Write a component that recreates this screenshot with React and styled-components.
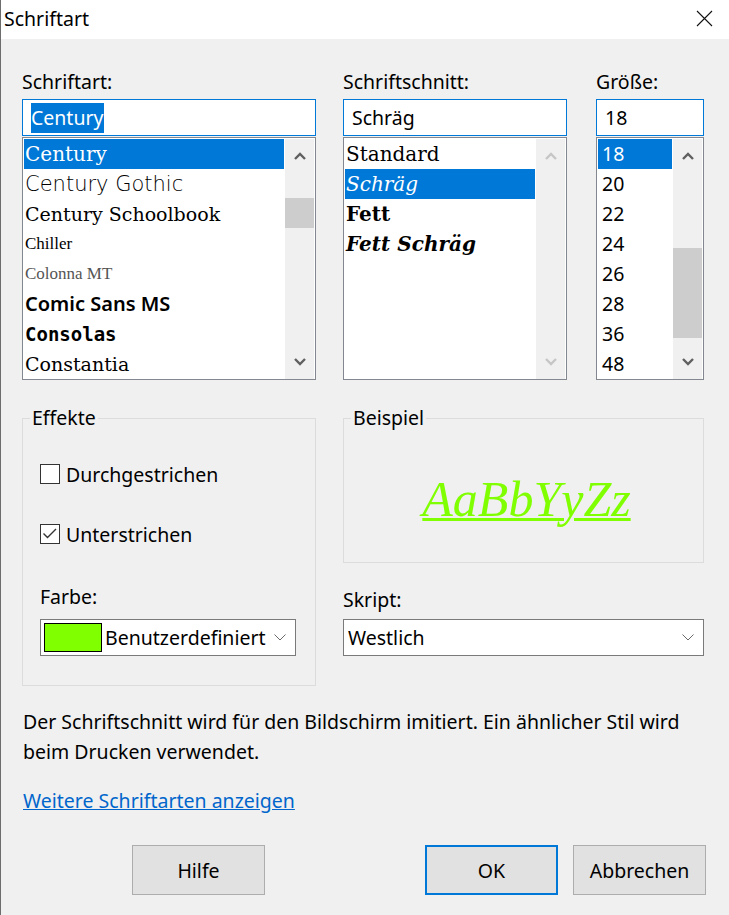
import React from "react";
import styled, { createGlobalStyle } from "styled-components";

const ui = `"Noto Sans", "Segoe UI", Arial, sans-serif`;

const GlobalStyle = createGlobalStyle`
  html, body {
    margin: 0;
    padding: 0;
    background: #f0f0f0;
  }
  * {
    box-sizing: border-box;
  }
`;

const fonts = [
  { name: "Century", family: `"DejaVu Serif", serif`, size: 20, selected: true },
  { name: "Century Gothic", family: `"DejaVu Sans", sans-serif`, size: 21, weight: 200, color: "#000" },
  { name: "Century Schoolbook", family: `"DejaVu Serif", serif`, size: 19 },
  { name: "Chiller", family: `"Liberation Serif", serif`, size: 17 },
  { name: "Colonna MT", family: `"Liberation Serif", serif`, size: 17, color: "#555" },
  { name: "Comic Sans MS", family: `"Noto Sans", sans-serif`, size: 20, weight: 600 },
  { name: "Consolas", family: `"DejaVu Sans Mono", monospace`, size: 19, weight: 600 },
  { name: "Constantia", family: `"DejaVu Serif", serif`, size: 19 },
];

const styles = [
  { name: "Standard", family: `"DejaVu Serif", serif`, size: 20 },
  { name: "Schräg", family: `"DejaVu Serif", serif`, size: 20, italic: true, selected: true },
  { name: "Fett", family: `"DejaVu Serif", serif`, size: 20, weight: 700 },
  { name: "Fett Schräg", family: `"DejaVu Serif", serif`, size: 20, weight: 700, italic: true },
];

const sizes = ["18", "20", "22", "24", "26", "28", "36", "48"];

function Chevron({ up, disabled }) {
  return (
    <svg width="12" height="8" viewBox="0 0 12 8">
      <path
        d={up ? "M1 7 L6 2 L11 7" : "M1 1 L6 6 L11 1"}
        fill="none"
        stroke={disabled ? "#c6c6c6" : "#606060"}
        strokeWidth="2.4"
      />
    </svg>
  );
}

function DropChevron() {
  return (
    <svg width="12" height="7" viewBox="0 0 12 7">
      <path d="M0.5 0.5 L6 6 L11.5 0.5" fill="none" stroke="#6a6a6a" strokeWidth="1" />
    </svg>
  );
}

function ScrollBar({ thumbTop, thumbHeight, disabled }) {
  return (
    <Scroll>
      <ArrowBox>
        <Chevron up disabled={disabled} />
      </ArrowBox>
      <Track>{thumbHeight ? <Thumb $top={thumbTop} $height={thumbHeight} /> : null}</Track>
      <ArrowBox>
        <Chevron disabled={disabled} />
      </ArrowBox>
    </Scroll>
  );
}

export default function App() {
  return (
    <>
      <GlobalStyle />
      <Window>
        <TitleBar>
          <Title>Schriftart</Title>
          <Close>
            <svg width="17" height="17" viewBox="0 0 17 17">
              <path d="M1 1 L16 16 M16 1 L1 16" stroke="#111" strokeWidth="1.1" />
            </svg>
          </Close>
        </TitleBar>

        <Body>
          <TopRow>
            <Column $width={294}>
              <Label>Schriftart:</Label>
              <TextBox>
                <Marked>Century</Marked>
              </TextBox>
              <ListBox>
                <Items>
                  {fonts.map((f) => (
                    <Item
                      key={f.name}
                      $family={f.family}
                      $size={f.size}
                      $weight={f.weight}
                      $italic={f.italic}
                      $color={f.color}
                      $selected={f.selected}
                    >
                      {f.name}
                    </Item>
                  ))}
                </Items>
                <ScrollBar thumbTop={25} thumbHeight={30} />
              </ListBox>
            </Column>

            <Column $width={224} $gap={27}>
              <Label>Schriftschnitt:</Label>
              <TextBox>Schräg</TextBox>
              <ListBox>
                <Items>
                  {styles.map((s) => (
                    <Item
                      key={s.name}
                      $family={s.family}
                      $size={s.size}
                      $weight={s.weight}
                      $italic={s.italic}
                      $selected={s.selected}
                    >
                      {s.name}
                    </Item>
                  ))}
                </Items>
                <ScrollBar disabled />
              </ListBox>
            </Column>

            <Column $width={108} $gap={29}>
              <Label>Größe:</Label>
              <TextBox>18</TextBox>
              <ListBox>
                <Items>
                  {sizes.map((s, i) => (
                    <Item key={s} $family={ui} $size={19.5} $selected={i === 0} $pad={4}>
                      {s}
                    </Item>
                  ))}
                </Items>
                <ScrollBar thumbTop={75} thumbHeight={90} />
              </ListBox>
            </Column>
          </TopRow>

          <LowerGrid>
            <LeftCol>
              <Group>
                <Legend>Effekte</Legend>
                <EffectsContent>
                  <CheckRow>
                    <Box />
                    <span>Durchgestrichen</span>
                  </CheckRow>
                  <CheckRow $spaced>
                    <Box>
                      <svg width="18" height="18" viewBox="0 0 18 18">
                        <path d="M2.5 8.5 L6.5 12.5 L15 4" fill="none" stroke="#333" strokeWidth="1.4" />
                      </svg>
                    </Box>
                    <span>Unterstrichen</span>
                  </CheckRow>
                  <Label $top={35} $bottom={9}>
                    Farbe:
                  </Label>
                  <Dropdown $pad={3}>
                    <Swatch />
                    <DropText>Benutzerdefiniert</DropText>
                    <DropChevron />
                  </Dropdown>
                </EffectsContent>
              </Group>
            </LeftCol>

            <RightCol>
              <Group>
                <Legend>Beispiel</Legend>
                <SampleArea>
                  <Sample>AaBbYyZz</Sample>
                </SampleArea>
              </Group>
              <Label $top={24} $bottom={6}>
                Skript:
              </Label>
              <Dropdown $pad={4}>
                <DropText>Westlich</DropText>
                <DropChevron />
              </Dropdown>
            </RightCol>
          </LowerGrid>

          <Note>
            Der Schriftschnitt wird für den Bildschirm imitiert. Ein ähnlicher Stil wird
            <br />
            beim Drucken verwendet.
          </Note>

          <MoreLink href="#">Weitere Schriftarten anzeigen</MoreLink>

          <ButtonRow>
            <Button>Hilfe</Button>
            <Spacer />
            <Button $default>OK</Button>
            <Button>Abbrechen</Button>
          </ButtonRow>
        </Body>
      </Window>
    </>
  );
}

const Window = styled.div`
  width: 729px;
  height: 915px;
  background: #f0f0f0;
  border-left: 1px solid #6d6d6d;
  font-family: ${ui};
  color: #000;
  overflow: hidden;
`;

const TitleBar = styled.div`
  height: 39px;
  background: #fff;
  display: flex;
  align-items: center;
  justify-content: space-between;
  padding: 0 16px 2px 3px;
`;

const Title = styled.div`
  font-size: 19.5px;
  line-height: 26px;
`;

const Close = styled.div`
  display: flex;
  align-items: center;
  justify-content: center;
  width: 17px;
  height: 17px;
`;

const Body = styled.div`
  padding: 30px 25px 20px 21px;
  font-size: 19.5px;
`;

const TopRow = styled.div`
  display: flex;
  align-items: flex-start;
`;

const Column = styled.div`
  width: ${(p) => p.$width}px;
  margin-left: ${(p) => p.$gap || 0}px;
  display: flex;
  flex-direction: column;
`;

const Label = styled.div`
  font-size: 19.5px;
  line-height: 26px;
  margin-top: ${(p) => p.$top || 0}px;
  margin-bottom: ${(p) => (p.$bottom === undefined ? 4 : p.$bottom)}px;
`;

const TextBox = styled.div`
  height: 37px;
  background: #fff;
  border: 1px solid #0078d7;
  padding: 0 8px;
  display: flex;
  align-items: center;
  font-size: 19.5px;
`;

const Marked = styled.span`
  background: #0078d7;
  color: #fff;
  line-height: 30px;
  padding-right: 1px;
`;

const ListBox = styled.div`
  margin-top: 1px;
  height: 243px;
  background: #fff;
  border: 1px solid #828790;
  padding: 1px 1px 0 1px;
  display: flex;
`;

const Items = styled.div`
  flex: 1;
  display: flex;
  flex-direction: column;
  overflow: hidden;
`;

const Item = styled.div`
  height: 30px;
  flex-shrink: 0;
  line-height: 30px;
  padding-left: ${(p) => p.$pad || 1}px;
  white-space: nowrap;
  font-family: ${(p) => p.$family};
  font-size: ${(p) => p.$size}px;
  font-weight: ${(p) => p.$weight || 400};
  font-style: ${(p) => (p.$italic ? "italic" : "normal")};
  color: ${(p) => (p.$selected ? "#fff" : p.$color || "#000")};
  background: ${(p) => (p.$selected ? "#0078d7" : "transparent")};
`;

const Scroll = styled.div`
  width: 29px;
  margin-left: 1px;
  background: #f0f0f0;
  display: flex;
  flex-direction: column;
`;

const ArrowBox = styled.div`
  height: 34px;
  display: flex;
  align-items: center;
  justify-content: center;
`;

const Track = styled.div`
  flex: 1;
  display: flex;
  flex-direction: column;
`;

const Thumb = styled.div`
  margin-top: ${(p) => p.$top}px;
  height: ${(p) => p.$height}px;
  background: #cdcdcd;
`;

const LowerGrid = styled.div`
  margin-top: 25px;
  display: grid;
  grid-template-columns: 294px 361px;
  column-gap: 27px;
  align-items: start;
`;

const LeftCol = styled.div`
  display: flex;
  flex-direction: column;
`;

const RightCol = styled.div`
  display: flex;
  flex-direction: column;
`;

const Group = styled.fieldset`
  margin: 0;
  padding: 0;
  min-width: 0;
  border: 1px solid #dcdcdc;
`;

const Legend = styled.legend`
  margin-left: 7px;
  padding: 0 2px;
  font-size: 19.5px;
  line-height: 26px;
`;

const EffectsContent = styled.div`
  padding: 28px 19px 29px 17px;
  display: flex;
  flex-direction: column;
`;

const CheckRow = styled.div`
  height: 30px;
  display: flex;
  align-items: center;
  gap: 6px;
  margin-top: ${(p) => (p.$spaced ? 30 : 0)}px;
  font-size: 19.5px;
`;

const Box = styled.div`
  width: 20px;
  height: 20px;
  border: 1px solid #333;
  background: #fff;
  display: flex;
  align-items: center;
  justify-content: center;
`;

const Dropdown = styled.div`
  height: 37px;
  background: #fff;
  border: 1px solid #7a7a7a;
  display: flex;
  align-items: center;
  padding: 0 9px 0 ${(p) => p.$pad}px;
  gap: 3px;
`;

const Swatch = styled.div`
  width: 58px;
  height: 29px;
  background: #80ff00;
  border: 1px solid #000;
`;

const DropText = styled.span`
  flex: 1;
  font-size: 19.5px;
  white-space: nowrap;
`;

const SampleArea = styled.div`
  height: 131px;
  display: flex;
  align-items: center;
  justify-content: center;
  padding: 4px 0 0 6px;
`;

const Sample = styled.span`
  font-family: "Liberation Serif", "Times New Roman", serif;
  font-style: italic;
  font-size: 50px;
  color: #80ff00;
  text-decoration: underline;
  text-decoration-thickness: 3px;
  text-underline-offset: 2px;
`;

const Note = styled.p`
  margin: 21px 0 0 1px;
  font-size: 19.5px;
  line-height: 30px;
  white-space: nowrap;
`;

const MoreLink = styled.a`
  display: inline-block;
  margin: 19px 0 0 1px;
  font-size: 19.5px;
  line-height: 30px;
  color: #0066cc;
  text-decoration: underline;
`;

const ButtonRow = styled.div`
  margin: 29px -2px 0 110px;
  display: flex;
  gap: 15px;
`;

const Spacer = styled.div`
  flex: 1;
`;

const Button = styled.div`
  width: 133px;
  height: 50px;
  background: #e1e1e1;
  border: ${(p) => (p.$default ? "2px solid #0078d7" : "1px solid #adadad")};
  display: flex;
  align-items: center;
  justify-content: center;
  font-size: 19.5px;
`;
